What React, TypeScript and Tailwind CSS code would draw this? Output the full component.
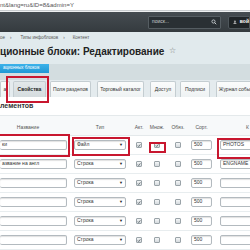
import React from "react";

const rows = [
  { name: "ки", type: "Файл", multi: true, code: "PHOTOS" },
  { name: "азвание на англ", type: "Строка", multi: false, code: "ENGNAME" },
  { name: "", type: "Строка", multi: false, code: "" },
  { name: "", type: "Строка", multi: false, code: "" },
  { name: "", type: "Строка", multi: false, code: "" },
  { name: "", type: "Строка", multi: false, code: "" },
];

const tabs = [
  { label: "а", w: "w-[10px]", ml: "ml-0", active: false },
  { label: "Свойства", w: "w-[33px]", ml: "ml-[3px]", active: true },
  { label: "Поля разделов", w: "w-[41px]", ml: "ml-[4px]", active: false },
  { label: "Торговый каталог", w: "w-[47px]", ml: "ml-[6px]", active: false },
  { label: "Доступ", w: "w-[26px]", ml: "ml-[6px]", active: false },
  { label: "Подписи", w: "w-[30px]", ml: "ml-[4px]", active: false },
  { label: "Журнал событий", w: "w-[45px]", ml: "ml-[6px]", active: false },
];

function Checkbox({ checked }: { checked: boolean }) {
  return (
    <div className="w-[6px] h-[6px] rounded-[1px] border border-[#9aa3a8] bg-gradient-to-b from-[#f4f6f7] to-[#d5dade] flex items-center justify-center">
      {checked && (
        <svg width="5" height="5" viewBox="0 0 10 10">
          <path d="M2 5 L4.2 7.5 L8.5 2" fill="none" stroke="#4a5358" strokeWidth="1.8" />
        </svg>
      )}
    </div>
  );
}

function Box({ className, children }: { className: string; children?: React.ReactNode }) {
  return (
    <div
      className={
        "shrink-0 h-[10px] border border-[#b3babf] rounded-[2px] bg-white shadow-[inset_0_1px_1px_rgba(0,0,0,0.12)] flex items-center px-[2px] text-[5px] text-[#333] overflow-hidden whitespace-nowrap " +
        className
      }
    >
      {children}
    </div>
  );
}

export default function App() {
  return (
    <div
      className="relative w-[250px] h-[250px] overflow-hidden bg-white"
      style={{ fontFamily: '"Liberation Sans", Arial, sans-serif' }}
    >
      {/* address bar */}
      <div className="h-[11px] bg-white border-b border-[#c9cdd0] flex items-center text-[6px] text-[#555] whitespace-nowrap">
        nt&amp;lang=ru&amp;ID=8&amp;admin=Y
      </div>
      <div className="h-[1px] bg-[#eef0f1]" />

      {/* dark header */}
      <div className="h-[20px] bg-gradient-to-b from-[#454c51] to-[#353b3f] flex items-center">
        <div className="flex-1" />
        <div className="shrink-0 w-[73px] h-[13px] bg-[#2a3034] border border-[#555d62] rounded-[1px] flex items-center px-[3px] text-[5px] text-[#c7cdd0]">
          <span className="flex-1">поиск...</span>
          <svg width="6" height="6" viewBox="0 0 12 12">
            <circle cx="5" cy="5" r="3.2" fill="none" stroke="#d5dadd" strokeWidth="1.6" />
            <path d="M7.4 7.4 L10.5 10.5" stroke="#d5dadd" strokeWidth="1.8" />
          </svg>
        </div>
        <div className="shrink-0 ml-[7px] w-[22px] h-[13px] bg-[#1f2427] border border-[#4e565b] rounded-l-[2px] flex items-center pl-[4px] gap-[3px] text-[5px] font-bold text-white whitespace-nowrap">
          <svg width="6" height="6" viewBox="0 0 12 12">
            <path d="M6 1 V7 M3 4.5 L6 7.5 L9 4.5" fill="none" stroke="#fff" strokeWidth="2" />
            <path d="M1.5 10.5 H10.5" stroke="#fff" strokeWidth="2" />
          </svg>
          вой
        </div>
      </div>

      {/* main */}
      <div className="bg-[#e1eaed]">
        <div className="h-[12px] flex items-center gap-[5px] text-[4.5px] text-[#555] whitespace-nowrap">
          <span>ое</span>
          <span>›</span>
          <span className="ml-[4px]">Типы инфоблоков</span>
          <span>›</span>
          <span className="ml-[3px]">Контент</span>
        </div>
        <div className="h-[14px] flex items-center text-[10px] font-bold text-[#222] whitespace-nowrap">
          ционные блоки: Редактирование
          <span className="ml-[5px] text-[8px] font-normal text-[#777]">☆</span>
        </div>
        <div className="h-[6px]" />
        <div className="bg-[#d3dde0]">
          <div className="w-[49px] h-[9px] bg-gradient-to-b from-[#3cb2ea] to-[#1f97d4] flex items-center pl-[3px] text-[4.5px] text-white whitespace-nowrap overflow-hidden">
            ационных блоков
          </div>
          <div className="h-[7px]" />
        </div>

        {/* tabs */}
        <div className="h-[17px] flex items-end bg-[#e4ebee] overflow-hidden">
          {tabs.map((t) => (
            <div
              key={t.label}
              className={
                "shrink-0 h-[16px] border border-b-0 border-[#c4cdd1] rounded-t-[2px] flex items-center justify-center text-[5px] whitespace-nowrap overflow-hidden " +
                t.w +
                " " +
                t.ml +
                (t.active
                  ? " bg-gradient-to-b from-[#e2e8ea] to-[#d5dcdf] text-[#222] font-bold"
                  : " bg-gradient-to-b from-[#fbfcfc] to-[#eef2f3] text-[#333]")
              }
            >
              {t.label}
            </div>
          ))}
        </div>
      </div>

      {/* white panel */}
      <div className="bg-white">
        <div className="h-[19px] flex items-center text-[7px] font-bold text-[#333] border-b border-[#e4e9eb]">
          лементов
        </div>
        <div className="h-[4px] bg-[#f7f9fa]" />

        {/* header row */}
        <div className="h-[16px] flex items-center text-[5px] text-[#555] whitespace-nowrap bg-[#f7f9fa] border-b border-[#e4e9eb] overflow-hidden">
          <div className="shrink-0 w-[67px] pr-[11px] text-center">Название</div>
          <div className="shrink-0 ml-[7px] w-[52px] text-center">Тип</div>
          <div className="shrink-0 ml-[4px] w-[18px] text-center">Акт.</div>
          <div className="shrink-0 w-[18px] text-center">Множ.</div>
          <div className="shrink-0 w-[24px] text-center">Обяз.</div>
          <div className="shrink-0 ml-[1px] w-[21px] text-center">Сорт.</div>
          <div className="shrink-0 ml-[8px] w-[40px] pl-[26px]">К</div>
        </div>

        {rows.map((r, i) => (
          <div key={i} className="h-[19px] flex items-center border-b border-[#e8edef] overflow-hidden">
            <Box className="w-[67px] border-l-0">{r.name}</Box>
            <Box className="ml-[7px] w-[52px] justify-between">
              <span>{r.type}</span>
              <span className="text-[4px] text-[#222]">▼</span>
            </Box>
            <div className="shrink-0 ml-[4px] w-[18px] flex justify-center">
              <Checkbox checked />
            </div>
            <div className="shrink-0 w-[18px] flex justify-center">
              <Checkbox checked={r.multi} />
            </div>
            <div className="shrink-0 w-[24px] flex justify-center">
              <Checkbox checked={false} />
            </div>
            <Box className="ml-[1px] w-[21px]">500</Box>
            <Box className="ml-[8px] w-[40px]">{r.code}</Box>
          </div>
        ))}
      </div>

      {/* red annotation frames */}
      <div className="absolute left-[6px] top-[76px] w-[43px] h-[27px] border-2 border-[#c8172f]" />
      <div className="absolute left-[-2px] top-[134px] w-[72px] h-[23px] border-2 border-[#c8172f]" />
      <div className="absolute left-[72px] top-[137px] w-[58px] h-[19px] border-2 border-[#c8172f]" />
      <div className="absolute left-[149px] top-[142px] w-[17px] h-[11px] border-2 border-[#c8172f]" />
      <div className="absolute left-[217px] top-[138px] w-[36px] h-[21px] border-2 border-[#c8172f]" />
    </div>
  );
}
